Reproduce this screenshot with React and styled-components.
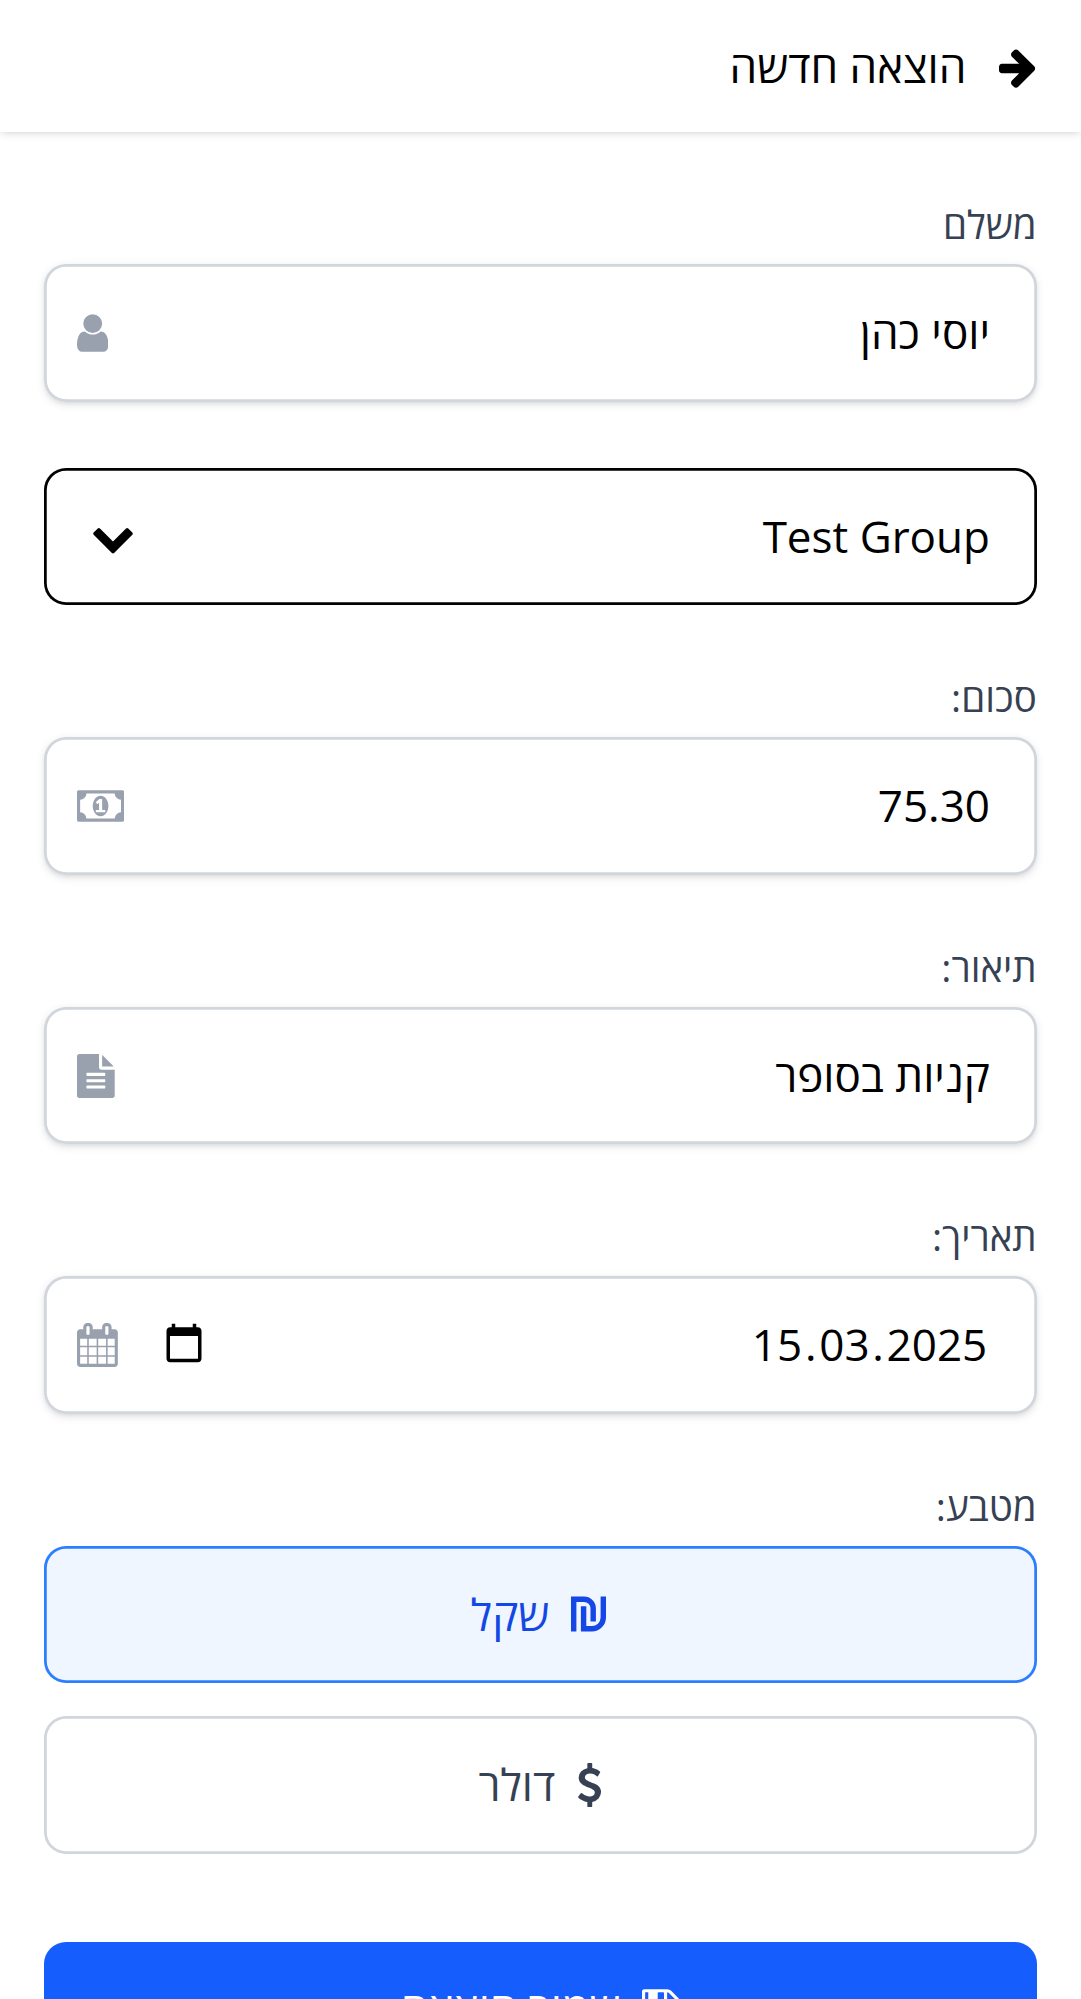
import React from "react";
import styled, { createGlobalStyle } from "styled-components";

const GlobalStyle = createGlobalStyle`
  *, *::before, *::after { box-sizing: border-box; }
  html { background: #fff; overflow: hidden; height: 1999px; }
  body {
    margin: 0;
    height: 1999px;
    overflow: hidden;
    font-family: "Open Sans", "Noto Sans", sans-serif;
    font-size: 44px;
    line-height: 66px;
    color: #000;
  }
`;

const shadow = `0 2.75px 8.25px rgba(0, 0, 0, 0.1), 0 2.75px 5.5px -2.75px rgba(0, 0, 0, 0.1)`;

const Page = styled.div`
  direction: rtl;
  height: 1999px;
  overflow: hidden;
  background: #fff;
`;

const Header = styled.header`
  display: flex;
  align-items: center;
  gap: 33px;
  height: 132px;
  padding: 0 44px;
  box-shadow: ${shadow};
`;

const Title = styled.h1`
  margin: 0;
  font-size: 44px;
  font-weight: 400;
  line-height: 66px;
`;

const Form = styled.main`
  display: flex;
  flex-direction: column;
  gap: 66px;
  padding: 66px 44.25px 0 44px;
`;

const Field = styled.div`
  display: flex;
  flex-direction: column;
  gap: 11px;
`;

const Label = styled.label`
  height: 55px;
  font-size: 38.5px;
  line-height: 53px;
  color: #364153;
`;

const Control = styled.div`
  display: flex;
  align-items: center;
  justify-content: space-between;
  height: 137.5px;
  padding: 0 46.75px 0 33px;
  border-radius: 22px;
  background: #fff;
  box-shadow: inset 0 0 0 2.75px ${(p) => (p.$dark ? "#000" : "#d1d5dc")}${(p) => (p.$dark ? "" : ", " + shadow)};
`;

const Value = styled.span`
  flex: 1;
  padding-bottom: ${(p) => p.$lift || 0}px;
  white-space: pre;
`;

const DatePart = styled.span`
  padding: 0 2.75px;
`;

const Options = styled.div`
  display: flex;
  flex-direction: column;
  gap: 33px;
`;

const ButtonText = styled.span`
  padding-bottom: ${(p) => p.$lift || 0}px;
`;

const Option = styled.button`
  display: flex;
  align-items: center;
  justify-content: center;
  gap: 22px;
  height: 137.5px;
  padding: 0;
  border: 0;
  border-radius: 22px;
  font: inherit;
  color: ${(p) => (p.$active ? "#1447e6" : "#364153")};
  background: ${(p) => (p.$active ? "#eff6ff" : "#fff")};
  box-shadow: inset 0 0 0 2.75px ${(p) => (p.$active ? "#2b7fff" : "#d1d5dc")};
`;

const SaveButton = styled.button`
  display: flex;
  align-items: center;
  justify-content: center;
  gap: 22px;
  height: 132px;
  margin-top: 22px;
  padding: 0;
  border: 0;
  border-radius: 22px;
  font: inherit;
  color: #fff;
  background: #155dfc;
`;

const Svg = styled.svg`
  display: block;
  flex: none;
  height: ${(p) => p.$size}px;
  width: ${(p) => p.$width}px;
  margin-top: ${(p) => p.$drop || 0}px;
  margin-left: ${(p) => p.$end || 0}px;
  margin-right: ${(p) => p.$start || 0}px;
  fill: ${(p) => p.$color || "currentColor"};
`;

const GLYPHS = {
  arrow: [128, 1536, "M1600 960q0 54-37 91l-651 651q-39 37-91 37-51 0-90-37l-75-75q-38-38-38-91t38-91l293-293h-704q-52 0-84.5-37.5t-32.5-90.5v-128q0-53 32.5-90.5t84.5-37.5h704l-293-294q-38-36-38-90t38-90l75-75q38-38 90-38 53 0 91 38l651 651q37 35 37 90z"],
  user: [256, 1280, "M1536 1399q0 109-62.5 187t-150.5 78h-854q-88 0-150.5-78t-62.5-187q0-85 8.5-160.5t31.5-152 58.5-131 94-89 134.5-34.5q131 128 313 128t313-128q76 0 134.5 34.5t94 89 58.5 131 31.5 152 8.5 160.5zm-256-887q0 159-112.5 271.5t-271.5 112.5-271.5-112.5-112.5-271.5 112.5-271.5 271.5-112.5 271.5 112.5 112.5 271.5z"],
  chevron: [0, 1792, "M1683 808l-742 741q-19 19-45 19t-45-19l-742-741q-19-19-19-45.5t19-45.5l166-165q19-19 45-19t45 19l531 531 531-531q19-19 45-19t45 19l166 165q19 19 19 45.5t-19 45.5z"],
  money: [0, 1920, "M768 1152h384v-96h-128v-448h-114l-148 137 77 80q42-37 55-57h2v288h-128v96zm512-256q0 70-21 142t-59.5 134-101.5 101-138 39-138-39-101.5-101-59.5-134-21-142 21-142 59.5-134 101.5-101 138-39 138 39 101.5 101 59.5 134 21 142zm512 256v-512q-106 0-181-75t-75-181h-1152q0 106-75 181t-181 75v512q106 0 181 75t75 181h1152q0-106 75-181t181-75zm128-832v1152q0 26-19 45t-45 19h-1792q-26 0-45-19t-19-45v-1152q0-26 19-45t45-19h1792q26 0 45 19t19 45z"],
  file: [128, 1536, "M1596 476q14 14 28 36h-472v-472q22 14 36 28zm-476 164h544v1056q0 40-28 68t-68 28h-1344q-40 0-68-28t-28-68v-1600q0-40 28-68t68-28h800v544q0 40 28 68t68 28zm160 736v-64q0-14-9-23t-23-9h-704q-14 0-23 9t-9 23v64q0 14 9 23t23 9h704q14 0 23-9t9-23zm0-256v-64q0-14-9-23t-23-9h-704q-14 0-23 9t-9 23v64q0 14 9 23t23 9h704q14 0 23-9t9-23zm0-256v-64q0-14-9-23t-23-9h-704q-14 0-23 9t-9 23v64q0 14 9 23t23 9h704q14 0 23-9t9-23z"],
  calendar: [64, 1664, "M192 1664h288v-288h-288v288zm352 0h320v-288h-320v288zm-352-352h288v-320h-288v320zm352 0h320v-320h-320v320zm-352-384h288v-288h-288v288zm736 736h320v-288h-320v288zm-384-736h320v-288h-320v288zm768 736h288v-288h-288v288zm-384-352h320v-320h-320v320zm-352-864v-288q0-13-9.5-22.5t-22.5-9.5h-64q-13 0-22.5 9.5t-9.5 22.5v288q0 13 9.5 22.5t22.5 9.5h64q13 0 22.5-9.5t9.5-22.5zm736 864h288v-320h-288v320zm-384-384h320v-288h-320v288zm384 0h288v-288h-288v288zm32-480v-288q0-13-9.5-22.5t-22.5-9.5h-64q-13 0-22.5 9.5t-9.5 22.5v288q0 13 9.5 22.5t22.5 9.5h64q13 0 22.5-9.5t9.5-22.5zm384-64v1280q0 52-38 90t-90 38h-1408q-52 0-90-38t-38-90v-1280q0-52 38-90t90-38h128v-96q0-66 47-113t113-47h64q66 0 113 47t47 113v96h384v-96q0-66 47-113t113-47h64q66 0 113 47t47 113v96h128q52 0 90 38t38 90z"],
  dollar: [384, 1024, "M1362 1185q0 153-99.5 263.5t-258.5 136.5v175q0 14-9 23t-23 9h-135q-13 0-22.5-9.5t-9.5-22.5v-175q-66-9-127.5-31t-101.5-44.5-74-48-46.5-37.5-17.5-18q-17-21-2-41l103-135q7-10 23-12 15-2 24 9l2 2q113 99 243 125 37 8 74 8 81 0 142.5-43t61.5-122q0-28-15-53t-33.5-42-58.5-37.5-66-32-80-32.5q-39-16-61.5-25t-61.5-26.5-62.5-31-56.5-35.5-53.5-42.5-43.5-49-35.5-58-21-66.5-8.5-78q0-138 98-242t255-134v-180q0-13 9.5-22.5t22.5-9.5h135q14 0 23 9t9 23v176q57 6 110.5 23t87 33.5 63.5 37.5 39 29 15 14q17 18 5 38l-81 146q-8 15-23 16-14 3-27-7-3-3-14.5-12t-39-26.5-58.5-32-74.5-26-85.5-11.5q-95 0-155 43t-60 111q0 26 8.5 48t29.5 41.5 39.5 33 56 31 60.5 27 70 27.5q53 20 81 31.5t76 35 75.5 42.5 62 50 53 63.5 31.5 76.5 13 94z"],
  save: [128, 1536, "M512 1536h768v-384h-768v384zm896 0h128v-896q0-14-10-38.5t-20-34.5l-281-281q-10-10-34-20t-39-10v416q0 40-28 68t-68 28h-576q-40 0-68-28t-28-68v-416h-128v1280h128v-416q0-40 28-68t68-28h832q40 0 68 28t28 68v416zm-384-928v-320q0-13-9.5-22.5t-22.5-9.5h-192q-13 0-22.5 9.5t-9.5 22.5v320q0 13 9.5 22.5t22.5 9.5h192q13 0 22.5-9.5t9.5-22.5zm640 32v928q0 40-28 68t-68 28h-1344q-40 0-68-28t-28-68v-1344q0-40 28-68t68-28h928q40 0 88 20t76 48l280 280q28 28 48 76t20 88z"],
};

function Glyph({ name, size = 44, color, end, drop }) {
  const [x, w, d] = GLYPHS[name];
  return (
    <Svg viewBox={`${x} 0 ${w} 1792`} $size={size} $width={(size * w) / 1792} $color={color} $end={end} $drop={drop} aria-hidden="true">
      <path d={d} />
    </Svg>
  );
}

function ShekelIcon() {
  return (
    <Svg viewBox="0 0 35 44" $size={44} $width={35} $start={3.5} $color="none" aria-hidden="true">
      <g stroke="currentColor" strokeWidth="5.4">
        <path d="M2.7 39.5V7.2H13A9.2 9.2 0 0 1 22.2 16.4V29.5" />
        <path d="M12.6 14.2V36.8H20.4A11.4 11.4 0 0 0 32.3 25.4V4.5" />
      </g>
    </Svg>
  );
}

function PickerIcon() {
  return (
    <Svg viewBox="0 0 24 24" $size={42} $width={42} $end={45.25} $drop={-3} aria-hidden="true">
      <path d="M20 3h-1V1h-2v2H7V1H5v2H4c-1.1 0-2 .9-2 2v16c0 1.1.9 2 2 2h16c1.1 0 2-.9 2-2V5c0-1.1-.9-2-2-2zm0 18H4V8h16v13z" />
    </Svg>
  );
}

const MUTED = "#99a1af";

function TextField({ label, value, icon, lift, drop, children }) {
  return (
    <Field>
      <Label>{label}</Label>
      <Control>
        <Value $lift={lift}>{value}</Value>
        {children}
        <Glyph name={icon} color={MUTED} drop={drop} />
      </Control>
    </Field>
  );
}

export default function App() {
  return (
    <Page>
      <GlobalStyle />
      <Header>
        <Glyph name="arrow" drop={2} />
        <Title>הוצאה חדשה</Title>
      </Header>
      <Form>
        <TextField label="משלם" value="יוסי כהן" icon="user" lift={2} />
        <Control $dark>
          <Value>Test Group</Value>
          <Glyph name="chevron" end={13.75} drop={2} />
        </Control>
        <TextField label="סכום:" value="75.30" icon="money" lift={2} />
        <TextField label="תיאור:" value="קניות בסופר" icon="file" drop={2} />
        <TextField
          label="תאריך:"
          icon="calendar"
          lift={2}
          value={
            <bdi dir="ltr">
              <DatePart>15</DatePart>.<DatePart>03</DatePart>.<DatePart>2025</DatePart>
            </bdi>
          }
        >
          <PickerIcon />
        </TextField>
        <Field>
          <Label>מטבע:</Label>
          <Options>
            <Option $active>
              <ShekelIcon />
              <ButtonText>שקל</ButtonText>
            </Option>
            <Option>
              <Glyph name="dollar" />
              <ButtonText $lift={2}>דולר</ButtonText>
            </Option>
          </Options>
        </Field>
        <SaveButton>
          <Glyph name="save" />
          <ButtonText $lift={2}>שמור הוצאה</ButtonText>
        </SaveButton>
      </Form>
    </Page>
  );
}
